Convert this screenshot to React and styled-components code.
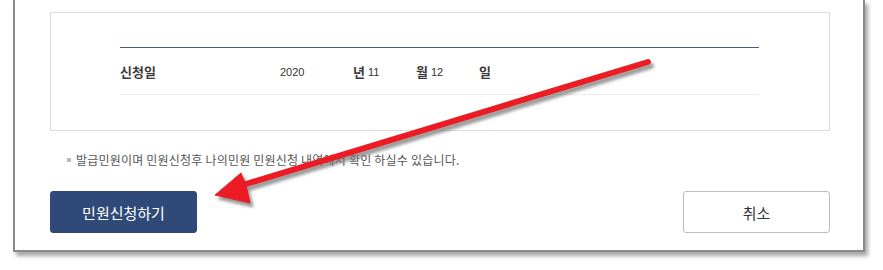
import styled, { createGlobalStyle } from "styled-components";

const GlobalStyle = createGlobalStyle`
  body {
    margin: 0;
    background: #fff;
    font-family: "Noto Sans CJK KR", "Noto Sans", sans-serif;
  }
`;

function App() {
  return (
    <Page>
      <GlobalStyle />
      <Frame>
        <FormBox>
          <Table>
            <Row>
              <Label>신청일</Label>
              <DateField>
                <Value width={73}>2020</Value>
                <Unit>년</Unit>
                <Value width={48}>11</Value>
                <Unit>월</Unit>
                <Value width={48}>12</Value>
                <Unit>일</Unit>
              </DateField>
            </Row>
          </Table>
        </FormBox>
        <Note>발급민원이며 민원신청후 나의민원 민원신청 내역에서 확인 하실수 있습니다.</Note>
        <Buttons>
          <Button primary>민원신청하기</Button>
          <Button>취소</Button>
        </Buttons>
      </Frame>
      <Arrow width="883" height="270" viewBox="0 0 883 270">
        <defs>
          <filter id="sh" x="-10%" y="-10%" width="120%" height="130%">
            <feGaussianBlur stdDeviation="1.5" />
          </filter>
        </defs>
        <g transform="translate(3 4)" fill="#7a7a7a" stroke="#7a7a7a" filter="url(#sh)" opacity="0.75">
          <line x1="648" y1="62" x2="246" y2="184" strokeWidth="6" strokeLinecap="round" />
          <polygon points="215,195 241,173 246,185 250,203" strokeWidth="1" />
        </g>
        <g fill="#ec1c24" stroke="#ec1c24">
          <line x1="648" y1="62" x2="246" y2="184" strokeWidth="6" strokeLinecap="round" />
          <polygon points="215,195 241,173 246,185 250,203" strokeWidth="1" strokeLinejoin="round" />
        </g>
      </Arrow>
    </Page>
  );
}
export default App;

const Page = styled.div`
  position: relative;
  width: 883px;
  height: 270px;
  overflow: hidden;
`;

const Frame = styled.div`
  margin-left: 13px;
  width: 852px;
  padding: 12px 33px 17px 35px;
  box-sizing: border-box;
  border: 2px solid #8a8a8a;
  border-top: none;
  background: #fff;
  box-shadow: 3px 4px 4px rgba(0, 0, 0, 0.35);
`;

const FormBox = styled.div`
  border: 1px solid #dcdcdc;
  padding: 34px 70px 35px 69px;
`;

const Table = styled.div`
  border-top: 1px solid #4b5d7e;
  border-bottom: 1px solid #ececec;
`;

const Row = styled.div`
  display: flex;
  align-items: center;
  height: 46px;
`;

const Label = styled.div`
  width: 160px;
  font-size: 13px;
  font-weight: 700;
  color: #3a3a3a;
`;

const DateField = styled.div`
  display: flex;
  align-items: center;
`;

const Value = styled.span`
  width: ${(p) => p.width}px;
  font-family: "Liberation Sans", Arial, sans-serif;
  font-size: 11px;
  color: #333;
  padding-top: 2px;
`;

const Unit = styled.span`
  width: 15px;
  font-size: 13px;
  font-weight: 700;
  color: #3a3a3a;
`;

const Note = styled.p`
  margin: 21px 0 0 17px;
  font-size: 12px;
  letter-spacing: 0.2px;
  color: #555;
  line-height: 16px;
  display: flex;
  align-items: center;

  &::before {
    content: "";
    width: 4px;
    height: 4px;
    background: #b5b5b5;
    margin-right: 5px;
  }
`;

const Buttons = styled.div`
  display: flex;
  justify-content: space-between;
  margin-top: 23px;
`;

const Button = styled.button`
  width: 147px;
  height: 42px;
  border-radius: 3px;
  border: 1px solid ${(p) => (p.primary ? "#2f4a79" : "#bdbdbd")};
  background: ${(p) => (p.primary ? "#2f4a79" : "#fff")};
  color: ${(p) => (p.primary ? "#fff" : "#333")};
  font-family: "Noto Sans CJK KR", sans-serif;
  font-size: 15px;
  cursor: pointer;
  padding: 0;
`;

const Arrow = styled.svg`
  position: absolute;
  left: 0;
  top: 0;
  pointer-events: none;
`;
